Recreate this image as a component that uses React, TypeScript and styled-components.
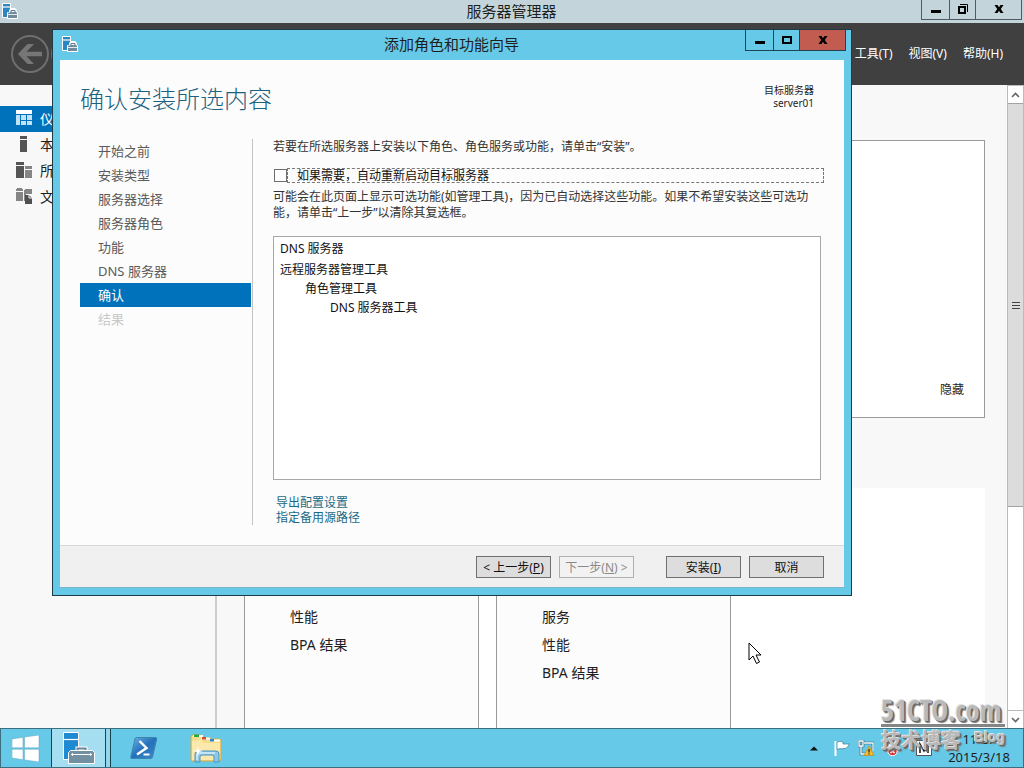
import React from "react";
import styled, { createGlobalStyle, css } from "styled-components";

const ink = "#1e1e1e";
const sky = "#66c9e8";

const Global = createGlobalStyle`
  *, *::before, *::after { box-sizing: border-box; }
  body {
    margin: 0;
    font-family: "Noto Sans", "Noto Sans CJK SC", sans-serif;
    font-size: 12px;
    color: ${ink};
  }
  button { font: inherit; color: inherit; padding: 0; margin: 0; }
  ul { list-style: none; margin: 0; padding: 0; }
  p, h1, h2 { margin: 0; font-weight: 400; }
`;

const Desktop = styled.div`
  position: relative;
  display: flex;
  flex-direction: column;
  height: 100vh;
  min-height: 640px;
  overflow: hidden;
  background: #f8f8f8;
`;

/* ---------- shared window parts ---------- */

const Caption = styled.header<{ $tall?: boolean }>`
  display: flex;
  align-items: flex-start;
  justify-content: space-between;
  flex: none;
  height: ${(p) => (p.$tall ? 30 : 23)}px;
  padding-left: 2px;
`;

const CaptionIcon = styled.span<{ $tall?: boolean }>`
  display: flex;
  padding-top: ${(p) => (p.$tall ? 6 : 3)}px;
`;

const CaptionTitle = styled.h2<{ $tall?: boolean }>`
  flex: 1;
  align-self: center;
  text-align: center;
  font-size: 15px;
  line-height: 20px;
  padding: 0 0 2px ${(p) => (p.$tall ? 80 : 84)}px;
`;

const WindowButtons = styled.div<{ $line: string }>`
  display: flex;
  border: 1px solid ${(p) => p.$line};
  border-top: 0;
  margin-right: 2px;
  button + button { border-left: 1px solid ${(p) => p.$line}; }
`;

const WindowButton = styled.button<{ $size?: "wide" | "narrow"; $red?: boolean; $tall?: boolean }>`
  display: flex;
  align-items: flex-start;
  justify-content: center;
  width: ${(p) => (p.$size === "wide" ? 46 : p.$size === "narrow" ? 26 : 27)}px;
  height: ${(p) => (p.$tall ? 20 : 19)}px;
  padding-top: ${(p) => (p.$tall ? 4 : 3)}px;
  border: 0;
  background: ${(p) => (p.$red ? "#c25b50" : "transparent")};
`;

/* ---------- server manager window ---------- */

const Manager = styled.section`
  flex: 1;
  min-height: 0;
  display: flex;
  flex-direction: column;
`;

const ManagerCaption = styled(Caption)`
  background: #c3d5db;
`;

const Banner = styled.div`
  display: flex;
  align-items: center;
  justify-content: space-between;
  flex: none;
  height: 62px;
  padding: 0 21px 0 11px;
  background: #404040;
`;

const NavButtons = styled.div`
  display: flex;
  gap: 2px;
`;

const RoundButton = styled.button`
  display: flex;
  border: 0;
  background: none;
`;

const MenuBar = styled.nav`
  display: flex;
  gap: 16px;
`;

const MenuItem = styled.button`
  border: 0;
  background: none;
  color: #fff;
  line-height: 22px;
`;

const ManagerBody = styled.div`
  flex: 1;
  min-height: 0;
  display: flex;
`;

const SideBar = styled.ul`
  flex: none;
  width: 217px;
  border-right: 2px solid #ccc;
  && { padding-top: 21px; }
`;

const SideItem = styled.li<{ $active?: boolean }>`
  display: flex;
  align-items: center;
  gap: 8px;
  height: 26px;
  padding: 0 0 2px 16px;
  font-size: 14px;
  background: ${(p) => (p.$active ? "#0072bc" : "transparent")};
  color: ${(p) => (p.$active ? "#fff" : ink)};
`;

const Dashboard = styled.main`
  flex: 1;
  min-width: 0;
  display: flex;
  flex-direction: column;
  padding: 55px 22px 0 27px;
`;

const WelcomeTile = styled.section`
  display: flex;
  align-items: flex-end;
  justify-content: flex-end;
  flex: none;
  height: 278px;
  padding: 0 20px 17px;
  border: 1px solid #999;
  background: #fff;
`;

const HideLink = styled.button`
  border: 0;
  background: none;
  line-height: 20px;
`;

const RoleArea = styled.section`
  display: flex;
  flex: 1;
  gap: 17px;
  margin-top: 70px;
  background: #fff;
`;

const RoleTile = styled.ul`
  flex: none;
  width: 235px;
  border: 1px solid #999;
  border-bottom: 0;
  background: #fcfcfc;
  font-size: 14px;
  line-height: 28px;
  && { padding: 114px 0 0 45px; }
`;

const ScrollTrack = styled.div`
  flex: none;
  display: flex;
  flex-direction: column;
  width: 17px;
  border: 1px solid #bbb;
  border-width: 1px 1px 0 1px;
  background: #fff;
`;

const ScrollButton = styled.button`
  flex: none;
  display: flex;
  align-items: center;
  justify-content: center;
  height: 17px;
  border: 0;
  background: #fff;
`;

const ScrollThumb = styled.div`
  display: flex;
  align-items: center;
  justify-content: center;
  flex: 0 0 63%;
  border: 1px solid #a3a3a3;
  border-width: 1px 0;
  background: #dcdcdc;
`;

const ScrollSpace = styled.div`
  flex: 1;
  border-bottom: 1px solid #bbb;
`;

/* ---------- wizard window ---------- */

const Wizard = styled.section`
  position: absolute;
  left: 52px;
  right: 172px;
  top: 29px;
  border: 1px solid #1d3c48;
  background: ${sky};
`;

const WizardCaption = styled(Caption)`
  padding: 0 3px 0 9px;
`;

const WizardClient = styled.div`
  margin: 0 7px 7px;
  border-bottom: 1px solid #7bb4c8;
  background: #fcfcfc;
`;

const WizardHead = styled.div`
  display: flex;
  justify-content: space-between;
  align-items: flex-start;
  height: 79px;
  padding: 24px 30px 0 20px;
`;

const WizardTitle = styled.h1`
  font-size: 24px;
  line-height: 30px;
  font-weight: 300;
  color: #1b6180;
`;

const Target = styled.p`
  font-size: 10px;
  line-height: 13px;
  text-align: right;
`;

const WizardColumns = styled.div`
  display: flex;
  padding: 0 20px 20px;
`;

const Steps = styled.ul`
  flex: none;
  width: 173px;
  border-right: 1px solid #c3c3c3;
  && { padding-right: 1px; }
`;

const Step = styled.li<{ $state?: "current" | "off" }>`
  height: 24px;
  padding-left: 18px;
  font-size: 13px;
  line-height: 24px;
  color: #5a5a5a;
  ${(p) => p.$state === "current" && css`background: #0072bc; color: #fff;`}
  ${(p) => p.$state === "off" && css`color: #c8c8c8;`}
`;

const Page = styled.div`
  flex: 1;
  min-width: 0;
  padding-left: 20px;
`;

const Note = styled.p`
  line-height: 16px;
  color: #333;
`;

const RestartLabel = styled.label`
  display: flex;
  align-items: center;
  height: 15px;
  margin: 13px 0 6px 1px;
`;

const Tick = styled.input`
  appearance: none;
  flex: none;
  width: 13px;
  height: 13px;
  margin: 0;
  border: 1px solid #6e6e6e;
  background: #fff;
`;

const RestartText = styled.span`
  flex: 1;
  padding-left: 9px;
  border: 1px dashed #777;
  line-height: 13px;
  color: #111;
`;

const Selection = styled.ul`
  height: 244px;
  margin: 15px 3px 0 0;
  border: 1px solid #a8a8a8;
  background: #fff;
  color: #111;
  && { padding: 0 6px; }
`;

const Feature = styled.li<{ $level: number }>`
  margin-top: ${(p) => (p.$level === 0 ? 2 : 0)}px;
  padding-left: ${(p) => p.$level * 25}px;
  line-height: 19px;
`;

const Links = styled.div`
  display: flex;
  flex-direction: column;
  align-items: flex-start;
  padding: 15px 3px 0;
  a {
    line-height: 15px;
    color: #1a6a85;
    text-decoration: none;
  }
`;

const WizardFoot = styled.footer`
  display: flex;
  justify-content: flex-end;
  gap: 8px;
  padding: 10px 20px 9px 0;
  border-top: 1px solid #d8d8d8;
  background: #f0f0f0;
`;

const PushButton = styled.button<{ $apart?: boolean }>`
  width: 75px;
  height: 22px;
  margin-left: ${(p) => (p.$apart ? 24 : 0)}px;
  border: 1px solid #707070;
  background: #ddd;
  color: #111;
  line-height: 20px;
  padding-top: 1px;
  white-space: nowrap;
  &:disabled {
    border-color: #b0b0b0;
    background: #f2f2f2;
    color: #8a8a8a;
  }
`;

/* ---------- task bar ---------- */

const TaskBar = styled.footer`
  display: flex;
  justify-content: space-between;
  flex: none;
  height: 40px;
  border: 1px solid #3b6f80;
  background: ${sky};
`;

const TaskGroup = styled.div`
  display: flex;
  align-items: stretch;
`;

const TaskButton = styled.button<{ $w: number; $active?: boolean }>`
  display: flex;
  align-items: center;
  justify-content: center;
  width: ${(p) => p.$w}px;
  border: 0;
  background: transparent;
  ${(p) =>
    p.$active &&
    css`
      border: 1px solid #17424f;
      border-width: 0 1px;
      background: #a5ddf1;
    `}
`;

const Stack = styled.span`
  width: 5px;
  border-right: 1px solid #17424f;
  background: #8fd6ee;
`;

const Tray = styled.div`
  display: flex;
  align-items: center;
  padding-right: 13px;
  gap: 8px;
`;

const Clock = styled.time`
  width: 62px;
  margin-left: 8px;
  text-align: center;
  font-size: 13px;
  line-height: 18px;
  white-space: nowrap;
`;

/* ---------- watermark and pointer ---------- */

const Mark = styled.div`
  position: absolute;
  right: 19px;
  bottom: 15px;
  width: 124px;
  font-weight: 700;
  color: #b9b9b9;
  text-shadow: -1px -1px 0 #e4e4e4, 1px 1px 0 #666, 2px 2px 1px #777;
`;

const MarkSite = styled.div`
  border-bottom: 3px solid #858585;
  font-family: "Open Sans Condensed", "Roboto Condensed", "Liberation Sans Narrow", sans-serif;
  font-size: 28px;
  line-height: 28px;
  white-space: nowrap;
`;

const MarkRow = styled.div`
  display: flex;
  justify-content: space-between;
  align-items: flex-start;
  padding-top: 2px;
  font-size: 20px;
  line-height: 24px;
  small {
    font-family: "Liberation Sans", sans-serif;
    font-size: 14px;
    line-height: 16px;
  }
`;

const Pointer = styled.svg`
  position: absolute;
  left: 73%;
  top: 642px;
`;

const SmallServerIcon = () => (
  <svg width="16" height="16" aria-hidden="true">
    <path d="M.5.5h8v14h-8z" fill="#2b86c2" stroke="#fff" />
    <path d="M0 4h8" stroke="#fff" strokeWidth="1.200" />
    <path d="M8.500 9V7.500l1-1h3l1 1V9" fill="none" stroke="#fff" strokeWidth="2.800" />
    <path d="M6.500 9.500l2-1h5l2 1v6h-10v-6z" fill="#6f8b9d" stroke="#fff" />
    <path d="M9 9V7.500h4V9" fill="none" stroke="#5d7b8e" />
    <path d="M6 11.500h9" stroke="#fff" strokeWidth=".8" />
  </svg>
);

const LargeServerIcon = () => (
  <svg width="34" height="34" viewBox="-1 -1 34 34" aria-hidden="true">
    <path d="M.5.5h15v27H.5z" fill="#1f8ad2" stroke="#fff" />
    <path d="M.5 7.500h15" stroke="#fff" strokeWidth="1.200" />
    <path d="M14.500 19v-2.500h8V19" fill="none" stroke="#fff" strokeWidth="4" />
    <path d="M14.500 19v-2.500h8V19" fill="none" stroke="#6b8798" strokeWidth="2" />
    <path d="M7.500 18.500h22l2 2v11h-26v-11z" fill="#7390a2" stroke="#fff" />
    <path d="M8.500 22.500h20" stroke="#fff" />
    <path d="M8 22.500l2-1.800v3.600zM29 22.500l-2-1.800v3.600z" fill="#fff" />
  </svg>
);

const Minimize = () => (
  <svg width="12" height="12" aria-hidden="true"><path d="M1 7h10v3H1z" /></svg>
);
const Maximize = () => (
  <svg width="12" height="12" aria-hidden="true"><path d="M2 3h8v6H2z" fill="none" stroke="#000" strokeWidth="2" /></svg>
);
const Restore = () => (
  <svg width="12" height="12" aria-hidden="true">
    <path d="M2 4h6v6H2z" fill="none" stroke="#000" strokeWidth="2" />
    <path d="M3 1.500h7.500V9" fill="none" stroke="#000" />
  </svg>
);
const Cross = () => (
  <svg width="12" height="12" aria-hidden="true">
    <path d="M1.500 2h3L6 4.200 7.500 2h3L7.800 6l2.700 4h-3L6 7.800 4.500 10h-3l2.700-4z" />
  </svg>
);

const Arrow = ({ shown }: { shown?: boolean }) => (
  <svg width="38" height="38" viewBox="0 0 38 38" aria-hidden="true">
    <circle cx="19" cy="19" r="18" fill="none" stroke="#6f6f6f" strokeWidth="2" />
    {shown && <path d="M7 19 16.500 9h6.500L15.500 16.800H31v4.400H15.500L23 29h-6.500z" fill="#767676" />}
  </svg>
);

const BoardIcon = () => (
  <svg width="16" height="16" aria-hidden="true">
    <path d="M0 5h4v10H0zM5 5h5v5H5zM11 5h5v5h-5zM5 11h5v4H5zM11 11h5v4h-5z" fill="#bfe2f7" />
    <path d="M0 0h16v4H0z" fill="#fff" />
  </svg>
);
const LocalIcon = () => (
  <svg width="16" height="16" aria-hidden="true"><path d="M4 0h7v3H4zM4 4h7v12H4z" fill="#555" /></svg>
);
const AllIcon = () => (
  <svg width="16" height="16" aria-hidden="true">
    <path d="M0 0h8v3H0zM0 4h8v12H0z" fill="#555" />
    <path d="M9 4h7v3H9zM9 8h7v8H9z" fill="#858585" />
  </svg>
);
const FileIcon = () => (
  <svg width="16" height="16" aria-hidden="true">
    <path d="M0 1h1V0h5v1h1v2H0zM0 4h7v9H0zM8 2h1V1h7v5H8zM8 6h2v7H8z" fill="#858585" />
    <path d="M9 7h4l3 3v6H9z" fill="#4f4f4f" />
    <path d="M13 6.500v3.500h3" fill="none" stroke="#f8f8f8" />
  </svg>
);

const Chevron = ({ down }: { down?: boolean }) => (
  <svg width="9" height="6" aria-hidden="true">
    <path d={down ? "M1 1l3.500 3.500L8 1" : "M1 5l3.500-3.500L8 5"} fill="none" stroke="#666" strokeWidth="1.600" />
  </svg>
);

const StartLogo = () => (
  <svg width="28" height="27" aria-hidden="true">
    <path d="M0 4l11-1.700v10.500H0zM12.500 2.100 27 0v12.800H12.500zM0 14.200h11v10.500L0 23zM12.500 14.200H27V27l-14.500-2.100z" fill="#fff" stroke="#5ba6bf" strokeWidth=".5" />
  </svg>
);

const ShellIcon = () => (
  <svg width="28" height="24" aria-hidden="true">
    <defs>
      <linearGradient id="shell" x1="0" y1="0" x2="1" y2="1">
        <stop offset="0" stopColor="#6fb4e4" />
        <stop offset=".5" stopColor="#2470bb" />
        <stop offset="1" stopColor="#3f8cc8" />
      </linearGradient>
    </defs>
    <path d="M6.500 1.500h19q1.500 0 1.200 1.500l-4.200 18q-.3 1.500-2 1.500H2q-1.500 0-1.200-1.500L5 3q.3-1.500 1.500-1.500z" fill="url(#shell)" stroke="#3a84ae" />
    <path d="M9.500 5l7 7-9.500 6.500" fill="none" stroke="#fff" strokeWidth="2.400" />
    <path d="M13.500 18.500h6" stroke="#fff" strokeWidth="2" />
  </svg>
);

const ExplorerIcon = () => (
  <svg width="34" height="30" aria-hidden="true">
    <path d="M2 4q0-2 2-2h8l2 3h7l2 1h8q1 0 1 2v18q0 2-2 2H3q-1 0-1-2z" fill="#f5dc8a" stroke="#d2ac4c" />
    <path d="M4 3h10M12 5.500h9M21 7.500h10" stroke="#fff" strokeWidth="2" />
    <path d="M5 1.500h5v2.500H5z" fill="#1fae3e" /><path d="M13 4h4v2.500h-4z" fill="#d94d2a" /><path d="M21 6h4v2.500h-4z" fill="#2e86d0" />
    <path d="M3 8l9-1 3 3h16v17H3z" fill="#fae9aa" />
    <path d="M6 29V21q0-3 3-3h18q3 0 3 3v8h-5v-5q0-2-2-2H13q-2 0-2 2v5z" fill="#8cc7e8" stroke="#4f93bd" />
    <path d="M8 27v-5q0-2 2-2h16" fill="none" stroke="#d8f0fb" strokeWidth="1.500" />
    <path d="M9 13l1 4 4 1-4 1-1 4-1-4-4-1 4-1z" fill="#fff" />
  </svg>
);

const FlagIcon = () => (
  <svg width="16" height="16" aria-hidden="true">
    <path d="M1.500 1v15" stroke="#fff" strokeWidth="2" />
    <path d="M3 2q3-1.500 6 0v2h6.500l-2 3Q12 9 9 8.500V9Q6 8 3 9.500z" fill="#fff" stroke="#3b7f97" strokeWidth=".7" />
  </svg>
);
const NetIcon = () => (
  <svg width="16" height="16" aria-hidden="true">
    <path d="M1 1h4v5H1zM3 6v8h6M6 3h9v8" fill="none" stroke="#2f6478" strokeWidth="2.600" />
    <path d="M1 1h4v5H1zM3 6v8h6M6 3h9v8" fill="none" stroke="#fff" strokeWidth="1.300" />
    <path d="M11 6l5 9.500H6z" fill="#f7bd27" stroke="#b98410" strokeWidth=".6" />
    <path d="M11 9v3.500M11 13.500v1" stroke="#222" strokeWidth="1.300" />
  </svg>
);
const SoundIcon = () => (
  <svg width="18" height="18" aria-hidden="true">
    <path d="M1 7h3l5-4v12l-5-4H1z" fill="#fff" stroke="#4b8299" strokeWidth=".7" />
    <circle cx="10.500" cy="12" r="4.700" fill="#d8302c" stroke="#fff" />
    <path d="M8.500 10l4 4M12.500 10l-4 4" stroke="#fff" strokeWidth="1.500" />
  </svg>
);
const InputIcon = () => (
  <svg width="16" height="16" aria-hidden="true">
    <path d="M.5.5h15v15H.5z" fill="#fff" stroke="#555" />
    <path d="M4 13V4l4 7 4-7v9" fill="none" stroke="#111" strokeWidth="1.500" />
  </svg>
);

const steps: { name: string; state?: "current" | "off" }[] = [
  { name: "开始之前" },
  { name: "安装类型" },
  { name: "服务器选择" },
  { name: "服务器角色" },
  { name: "功能" },
  { name: "DNS 服务器" },
  { name: "确认", state: "current" },
  { name: "结果", state: "off" },
];

const features = [
  { name: "DNS 服务器", level: 0 },
  { name: "远程服务器管理工具", level: 0 },
  { name: "角色管理工具", level: 1 },
  { name: "DNS 服务器工具", level: 2 },
];

export default function App() {
  return (
    <Desktop>
      <Global />
      <Manager>
        <ManagerCaption>
          <CaptionIcon><SmallServerIcon /></CaptionIcon>
          <CaptionTitle>服务器管理器</CaptionTitle>
          <WindowButtons $line="#4f5b60">
            <WindowButton aria-label="最小化"><Minimize /></WindowButton>
            <WindowButton $size="narrow" aria-label="还原"><Restore /></WindowButton>
            <WindowButton $size="wide" aria-label="关闭"><Cross /></WindowButton>
          </WindowButtons>
        </ManagerCaption>
        <Banner>
          <NavButtons>
            <RoundButton aria-label="后退"><Arrow shown /></RoundButton>
            <RoundButton aria-label="前进"><Arrow /></RoundButton>
          </NavButtons>
          <MenuBar>
            <MenuItem>工具(T)</MenuItem>
            <MenuItem>视图(V)</MenuItem>
            <MenuItem>帮助(H)</MenuItem>
          </MenuBar>
        </Banner>
        <ManagerBody>
          <SideBar>
            <SideItem $active><BoardIcon />仪</SideItem>
            <SideItem><LocalIcon />本</SideItem>
            <SideItem><AllIcon />所</SideItem>
            <SideItem><FileIcon />文</SideItem>
          </SideBar>
          <Dashboard>
            <WelcomeTile><HideLink>隐藏</HideLink></WelcomeTile>
            <RoleArea>
              <RoleTile>
                <li>性能</li>
                <li>BPA 结果</li>
              </RoleTile>
              <RoleTile>
                <li>服务</li>
                <li>性能</li>
                <li>BPA 结果</li>
              </RoleTile>
            </RoleArea>
          </Dashboard>
          <ScrollTrack>
            <ScrollButton aria-label="向上滚动"><Chevron /></ScrollButton>
            <ScrollThumb>
              <svg width="8" height="8" aria-hidden="true"><path d="M0 1.500h8M0 4.500h8M0 7.500h8" stroke="#444" /></svg>
            </ScrollThumb>
            <ScrollSpace />
            <ScrollButton aria-label="向下滚动"><Chevron down /></ScrollButton>
          </ScrollTrack>
        </ManagerBody>
      </Manager>

      <TaskBar>
        <TaskGroup>
          <TaskButton $w={50} aria-label="开始"><StartLogo /></TaskButton>
          <TaskButton $w={55} $active aria-label="服务器管理器"><LargeServerIcon /></TaskButton>
          <Stack />
          <TaskButton $w={66} aria-label="PowerShell"><ShellIcon /></TaskButton>
          <TaskButton $w={58} aria-label="文件资源管理器"><ExplorerIcon /></TaskButton>
        </TaskGroup>
        <Tray>
          <svg width="8" height="5" aria-hidden="true"><path d="M0 4.500 4 .5l4 4z" fill="#111" /></svg>
          <span />
          <FlagIcon />
          <NetIcon />
          <SoundIcon />
          <span />
          <InputIcon />
          <Clock>11:27<br />2015/3/18</Clock>
        </Tray>
      </TaskBar>

      <Wizard>
        <WizardCaption $tall>
          <CaptionIcon $tall><SmallServerIcon /></CaptionIcon>
          <CaptionTitle $tall>添加角色和功能向导</CaptionTitle>
          <WindowButtons $line="#1d4655">
            <WindowButton $tall aria-label="最小化"><Minimize /></WindowButton>
            <WindowButton $tall $size="narrow" aria-label="最大化"><Maximize /></WindowButton>
            <WindowButton $tall $size="wide" $red aria-label="关闭"><Cross /></WindowButton>
          </WindowButtons>
        </WizardCaption>
        <WizardClient>
          <WizardHead>
            <WizardTitle>确认安装所选内容</WizardTitle>
            <Target>目标服务器<br />server01</Target>
          </WizardHead>
          <WizardColumns>
            <Steps>
              {steps.map((s) => <Step key={s.name} $state={s.state}>{s.name}</Step>)}
            </Steps>
            <Page>
              <Note>若要在所选服务器上安装以下角色、角色服务或功能，请单击“安装”。</Note>
              <RestartLabel>
                <Tick type="checkbox" />
                <RestartText>如果需要，自动重新启动目标服务器</RestartText>
              </RestartLabel>
              <Note>可能会在此页面上显示可选功能(如管理工具)，因为已自动选择这些功能。如果不希望安装这些可选功能，请单击“上一步”以清除其复选框。</Note>
              <Selection>
                {features.map((f) => <Feature key={f.name} $level={f.level}>{f.name}</Feature>)}
              </Selection>
              <Links>
                <a href="#export">导出配置设置</a>
                <a href="#source">指定备用源路径</a>
              </Links>
            </Page>
          </WizardColumns>
          <WizardFoot>
            <PushButton>&lt; 上一步(<u>P</u>)</PushButton>
            <PushButton disabled>下一步(<u>N</u>) &gt;</PushButton>
            <PushButton $apart>安装(<u>I</u>)</PushButton>
            <PushButton>取消</PushButton>
          </WizardFoot>
        </WizardClient>
      </Wizard>

      <Mark>
        <MarkSite>51CTO.com</MarkSite>
        <MarkRow>技术博客<small>Blog</small></MarkRow>
      </Mark>
      <Pointer width="14" height="23" aria-hidden="true">
        <path d="M1 1v17l4-4 3.500 7.500 3-1.500L8 13h5z" fill="#fff" stroke="#000" />
      </Pointer>
    </Desktop>
  );
}
